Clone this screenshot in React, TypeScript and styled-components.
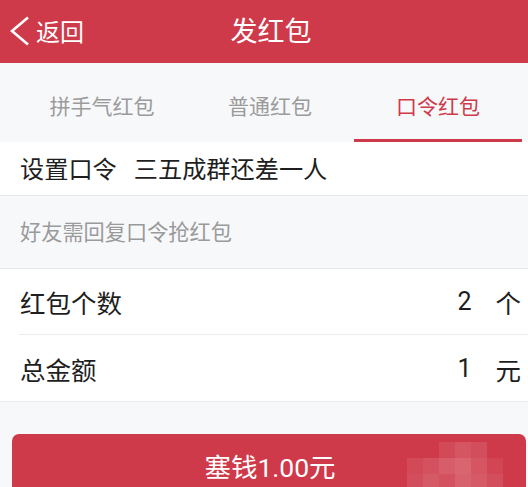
import React from "react";
import styled, { createGlobalStyle } from "styled-components";

const RED = "#cf3a4a";

const Global = createGlobalStyle`
  html, body { margin: 0; padding: 0; background: #f7f8fa; overflow: hidden; }
  body { font-family: "Noto Sans CJK SC", "Noto Sans", Roboto, sans-serif; }
  * { box-sizing: border-box; }
`;

const Page = styled.div`
  width: 528px;
  height: 487px;
  display: flex;
  flex-direction: column;
  background: #f7f8fa;
  overflow: hidden;
`;

const Header = styled.header`
  height: 63px;
  flex: none;
  background: ${RED};
  display: grid;
  grid-template-columns: 1fr auto 1fr;
  align-items: center;
  color: #fff;
  padding: 0 0 0 10px;
`;

const Back = styled.div`
  display: flex;
  align-items: center;
  gap: 6px;
  font-size: 24px;
  line-height: 1;
  margin-top: -2px;
`;

const Title = styled.div`
  font-size: 27px;
  line-height: 1;
  margin-top: -4px;
  margin-left: 4px;
`;

const Tabs = styled.nav`
  height: 79px;
  flex: none;
  display: grid;
  grid-template-columns: repeat(3, 1fr);
  padding: 0 6px 0 18px;
  background: #f7f8fa;
`;

const Tab = styled.div<{ $active?: boolean }>`
  display: flex;
  align-items: center;
  justify-content: center;
  font-size: 21px;
  padding-top: 8px;
  color: ${(p) => (p.$active ? RED : "#9b9b9b")};
  border-bottom: 3px solid ${(p) => (p.$active ? RED : "transparent")};
`;

const CodeRow = styled.div`
  height: 54px;
  flex: none;
  background: #fff;
  border-bottom: 1px solid #e6e6e8;
  display: flex;
  align-items: center;
  padding: 0 20px 2px;
  font-size: 24.2px;
  color: #1e1e1e;
  gap: 17px;
`;

const Hint = styled.div`
  height: 73px;
  flex: none;
  display: flex;
  align-items: center;
  padding: 0 20px 3px;
  font-size: 21.2px;
  color: #9a9a9a;
  border-bottom: 1px solid #e6e6e8;
`;

const Section = styled.section`
  flex: none;
  background: #fff;
  padding-left: 19px;
  border-bottom: 1px solid #ececee;
`;

const Row = styled.div<{ $last?: boolean }>`
  height: 66px;
  display: flex;
  align-items: center;
  justify-content: space-between;
  padding: 0 7px 0 1px;
  font-size: 25.5px;
  color: #1e1e1e;
  border-bottom: ${(p) => (p.$last ? "none" : "1px solid #ececee")};
`;

const Value = styled.div`
  display: flex;
  align-items: center;
  gap: 24px;
`;

const Num = styled.span`
  font-family: Roboto, "Noto Sans", sans-serif;
  font-size: 25px;
`;

const Footer = styled.div`
  flex: none;
  padding: 32px 2px 0 12px;
`;

const Button = styled.div`
  position: relative;
  height: 80px;
  border-radius: 7px;
  background: ${RED};
  color: #fff;
  display: flex;
  justify-content: center;
  padding-top: 16px;
  padding-left: 2px;
  font-size: 26.5px;
  line-height: 1.2;
  overflow: hidden;
`;

const Digits = styled.span`
  font-family: Roboto, "Noto Sans", sans-serif;
`;

const Mosaic = styled.div`
  position: absolute;
  left: 395px;
  top: 8px;
  display: grid;
  grid-template-columns: repeat(6, 16px);
  grid-auto-rows: 16px;
`;

const Cell = styled.span`
  display: block;
`;

const cells = [
  0, 0, 0.08, 0.14, 0.1, 0,
  0.08, 0.12, 0.18, 0.22, 0.14, 0.06,
  0.1, 0.16, 0.12, 0.2, 0.16, 0.1,
];

export default function App() {
  return (
    <>
      <Global />
      <Page>
        <Header>
          <Back>
            <svg width="20" height="30" viewBox="0 0 20 30" fill="none">
              <polyline points="18,1.5 2,15 18,28.5" stroke="#fff" strokeWidth="2.6" strokeLinejoin="miter" />
            </svg>
            <span>返回</span>
          </Back>
          <Title>发红包</Title>
          <div />
        </Header>
        <Tabs>
          <Tab>拼手气红包</Tab>
          <Tab>普通红包</Tab>
          <Tab $active>口令红包</Tab>
        </Tabs>
        <CodeRow>
          <span>设置口令</span>
          <span>三五成群还差一人</span>
        </CodeRow>
        <Hint>好友需回复口令抢红包</Hint>
        <Section>
          <Row>
            <span>红包个数</span>
            <Value>
              <Num>2</Num>
              <span>个</span>
            </Value>
          </Row>
          <Row $last>
            <span>总金额</span>
            <Value>
              <Num>1</Num>
              <span>元</span>
            </Value>
          </Row>
        </Section>
        <Footer>
          <Button>
            <span>
              塞钱<Digits>1.00</Digits>元
            </span>
            <Mosaic>
              {cells.map((a, i) => (
                <Cell key={i} style={{ background: `rgba(255,255,255,${a})` }} />
              ))}
            </Mosaic>
          </Button>
        </Footer>
      </Page>
    </>
  );
}
